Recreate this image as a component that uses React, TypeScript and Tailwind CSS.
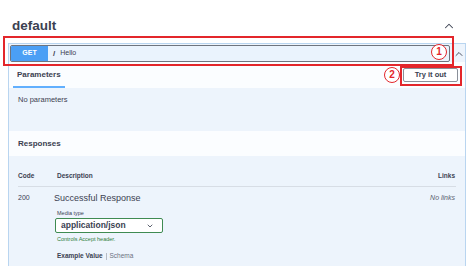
import { ChevronUp, ChevronDown } from "lucide-react";

const Circled = ({ n }: { n: string }) => (
  <span className="flex items-center justify-center w-[16px] h-[16px] rounded-full border-[1.5px] border-[#e3262b] bg-white text-[#e3262b] text-[10px] font-bold leading-none">
    {n}
  </span>
);

const App = () => {
  return (
    <div
      className="relative w-[474px] h-[266px] overflow-hidden bg-white text-[#3b4151]"
      style={{ fontFamily: '"Liberation Sans", Arial, sans-serif' }}
    >
      {/* Tag header */}
      <div className="flex items-center justify-between h-[43px] pt-[9px] pl-[12px] pr-[18px]">
        <h3 className="text-[13.5px] font-bold">default</h3>
        <ChevronUp size={14} strokeWidth={1.8} className="text-[#3b4151]" />
      </div>

      {/* Operation block */}
      <div className="mx-[8px] h-[240px] border border-[#b9d5f0] bg-[#edf4fc]">
        {/* Summary */}
        <div className="flex items-center h-[18px] pt-[1px] pl-[1px]">
          <div className="flex items-center w-[440px] h-[17px] border border-[#6e747e] rounded-[2px] bg-[#eaf3fd] overflow-hidden">
            <span className="flex items-center justify-center w-[37px] h-full bg-[#4b9ff5] text-white text-[7px] font-bold">
              GET
            </span>
            <span className="ml-[5px] text-[8px] font-bold">/</span>
            <span className="ml-[5px] text-[7px]">Hello</span>
          </div>
          <ChevronUp size={12} strokeWidth={1.8} className="ml-[3px] text-[#3b4151]" />
        </div>

        {/* Parameters header */}
        <div className="flex items-center justify-between h-[26px] bg-[#fbfdff]">
          <div className="relative ml-[4px] h-full flex items-center px-[4px]">
            <span className="text-[8px] font-bold">Parameters</span>
            <span className="absolute left-0 right-0 bottom-0 h-[2px] bg-[#61affe]" />
          </div>
          <button className="mr-[7px] w-[55px] h-[14px] border border-[#8a9099] rounded-[2px] bg-white text-[7.5px] font-bold text-[#3b4151]">
            Try it out
          </button>
        </div>

        {/* Parameters body */}
        <div className="h-[43px] pt-[6px] pl-[9px] text-[7.5px]">No parameters</div>

        {/* Responses header */}
        <div className="flex items-center h-[25px] pl-[9px] bg-[#fbfdff]">
          <span className="text-[8px] font-bold">Responses</span>
        </div>

        {/* Responses table */}
        <div className="px-[9px]">
          <div className="flex items-end h-[31px] pb-[5px] border-b border-[#d7dde5] text-[6.5px] font-bold">
            <span className="w-[39px]">Code</span>
            <span className="flex-1">Description</span>
            <span className="pr-[1px]">Links</span>
          </div>
          <div className="flex pt-[5px]">
            <span className="w-[39px] text-[7px] leading-[12px]">200</span>
            <div className="flex-1">
              <div className="-ml-[3px] text-[9px] leading-[12px]">Successful Response</div>
              <div className="mt-[5px] text-[5.5px] leading-[8px]">Media type</div>
              <div className="flex items-center justify-between -ml-[2px] w-[108px] h-[15px] mt-[1px] pl-[5px] pr-[8px] border border-[#3f8b52] rounded-[2px] bg-white">
                <span className="text-[8.5px] font-bold">application/json</span>
                <ChevronDown size={8} strokeWidth={2.5} />
              </div>
              <div className="mt-[2px] text-[5.5px] leading-[8px] text-[#2f7d3a]">Controls Accept header.</div>
              <div className="flex items-center mt-[9px] text-[6.5px] leading-[8px]">
                <span className="font-bold">Example Value</span>
                <span className="mx-[3px] w-px h-[7px] bg-[#b6bcc5]" />
                <span className="text-[#6b7280]">Schema</span>
              </div>
            </div>
            <span className="text-[7px] italic leading-[12px] pr-[1px] text-[#5b6270]">No links</span>
          </div>
        </div>
      </div>

      {/* Annotations */}
      <div className="absolute left-[3px] top-[36px] w-[451px] h-[30px] border-2 border-[#e3262b]" />
      <div className="absolute left-[431px] top-[44px]">
        <Circled n="1" />
      </div>
      <div className="absolute left-[400px] top-[66px] w-[62px] h-[20px] border-2 border-[#e3262b]" />
      <div className="absolute left-[384px] top-[67px]">
        <Circled n="2" />
      </div>
    </div>
  );
};

export default App;
